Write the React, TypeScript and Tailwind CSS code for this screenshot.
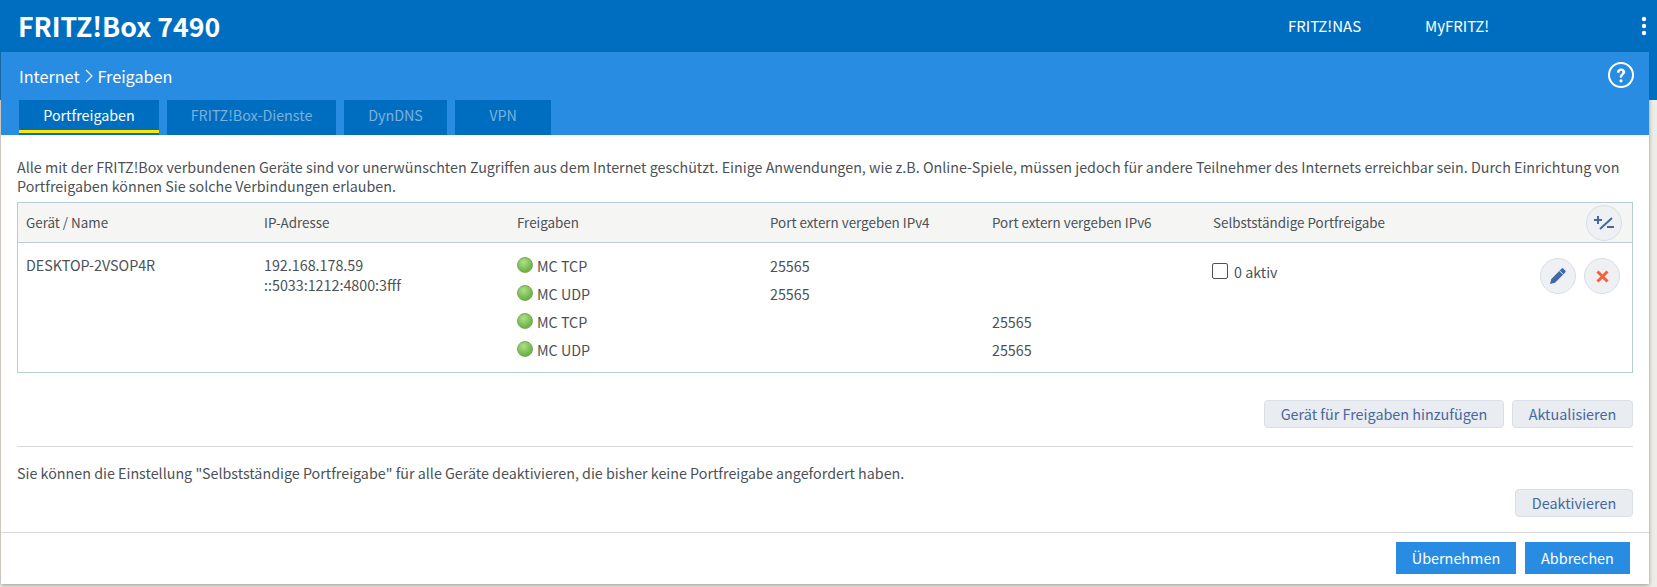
const font = { fontFamily: '"Noto Sans CJK SC", "Noto Sans", sans-serif' }

const shares = [
  { name: 'MC TCP', v4: '25565', v6: '' },
  { name: 'MC UDP', v4: '25565', v6: '' },
  { name: 'MC TCP', v4: '', v6: '25565' },
  { name: 'MC UDP', v4: '', v6: '25565' },
]

const tabs = [
  { label: 'Portfreigaben', width: 'w-[140px]', active: true },
  { label: 'FRITZ!Box-Dienste', width: 'w-[169px]', active: false },
  { label: 'DynDNS', width: 'w-[103px]', active: false },
  { label: 'VPN', width: 'w-[96px]', active: false },
]

const rowStarts = ['row-start-1', 'row-start-2', 'row-start-3', 'row-start-4']

function Led() {
  return (
    <span className="w-[16px] h-[16px] rounded-full shrink-0 border border-[#78a85c] bg-[radial-gradient(circle_at_40%_30%,#b0e088,#6cb446_70%)]" />
  )
}

function GreyButton({ label, width }: { label: string; width: string }) {
  return (
    <button className={`${width} h-[28px] rounded-[4px] bg-[#e9ecf0] border border-[#d8dfe6] text-[14.4px] leading-[26px] text-[#47689f]`}>
      {label}
    </button>
  )
}

function RoundButton({ children }: { children: React.ReactNode }) {
  return (
    <button className="w-[36px] h-[36px] rounded-full bg-[#eef0f3] border border-[#d8dfe6] flex items-center justify-center">
      {children}
    </button>
  )
}

export default function App() {
  return (
    <div className="w-[1657px] h-[587px] overflow-hidden bg-[#efede8] flex flex-col text-[#4b5157]" style={font}>
      {/* Header */}
      <header className="h-[52px] bg-[#006ec0] flex items-center text-white shrink-0">
        <h1 className="ml-[18px] text-[26.7px] leading-[52px] font-bold w-[1270px]">FRITZ!Box 7490</h1>
        <span className="text-[15px] w-[137px]">FRITZ!NAS</span>
        <span className="text-[15px] w-[220px]">MyFRITZ!</span>
        <svg width="6" height="20" viewBox="0 0 6 20" className="-ml-[4px]">
          <circle cx="3" cy="3" r="2.2" fill="#fff" />
          <circle cx="3" cy="10" r="2.2" fill="#fff" />
          <circle cx="3" cy="17" r="2.2" fill="#fff" />
        </svg>
      </header>

      <div className="flex flex-1 min-h-0">
        <div className="w-px h-[48px] bg-[#006ec0]" />
        <main className="w-[1648px] h-[532px] bg-white shadow-[0_1px_4px_rgba(90,85,70,0.6)] flex flex-col">
          {/* Title bar and tabs */}
          <div className="h-[83px] bg-[#278ce2] text-white shrink-0">
            <div className="h-[48px] flex items-center justify-between pl-[18px] pr-[15px]">
              <div className="text-[16.2px] flex items-center">
                Internet
                <svg width="12" height="16" viewBox="0 0 12 16" className="mx-[3px]">
                  <path d="M3 2l6 6-6 6" fill="none" stroke="#fff" strokeWidth="1.1" />
                </svg>
                Freigaben
              </div>
              <svg width="26" height="26" viewBox="0 0 26 26" className="-mt-[2px]">
                <circle cx="13" cy="13" r="12" fill="none" stroke="#fff" strokeWidth="2" />
                <path d="M9.3 10.2c.2-2.2 1.7-3.3 3.8-3.3 2.2 0 3.7 1.2 3.7 3.100 0 2.900-3.100 2.800-3.100 5.200h-1.600c0-3.200 2.800-3.200 2.800-5.100 0-1-.7-1.600-1.800-1.600-1.200 0-1.900.7-2 1.900z" fill="#fff" stroke="#fff" strokeWidth=".9" />
                <circle cx="13" cy="18.800" r="1.600" fill="#fff" />
              </svg>
            </div>
            <nav className="flex gap-[8px] pl-[18px]">
              {tabs.map((tab) => (
                <div
                  key={tab.label}
                  className={`${tab.width} h-[35px] bg-[#006ec0] text-[14.3px] text-center ${tab.active ? 'text-white' : 'text-[#7db0da]'}`}
                >
                  <div className={`h-[33px] leading-[30px] ${tab.active ? 'border-b-[3px] border-[#ffe600]' : ''}`}>{tab.label}</div>
                </div>
              ))}
            </nav>
          </div>

          {/* Content */}
          <div className="flex-1 px-[16px] pt-[22px] text-[14.3px] leading-[19px]">
            <p className="w-[1620px]">
              Alle mit der FRITZ!Box verbundenen Geräte sind vor unerwünschten Zugriffen aus dem Internet geschützt. Einige Anwendungen, wie z.B. Online-Spiele, müssen jedoch für andere Teilnehmer des Internets erreichbar sein. Durch Einrichtung von Portfreigaben können Sie solche Verbindungen erlauben.
            </p>

            <div className="mt-[7px] border border-[#b9cbd9] h-[171px]">
              <div className="h-[40px] bg-[#f5f5f3] border-b border-[#b9cbd9] grid grid-cols-[238px_253px_253px_222px_221px_1fr] pl-[8px] items-center text-[13.4px]">
                <div>Gerät / Name</div>
                <div>IP-Adresse</div>
                <div>Freigaben</div>
                <div>Port extern vergeben IPv4</div>
                <div>Port extern vergeben IPv6</div>
                <div className="flex items-center justify-between pr-[10px]">
                  Selbstständige Portfreigabe
                  <RoundButton>
                    <svg width="22" height="18" viewBox="0 0 22 18">
                      <path d="M1 6h8M5 2v8M14 13h7M7 15L19 4" fill="none" stroke="#47689f" strokeWidth="2" />
                    </svg>
                  </RoundButton>
                </div>
              </div>
              <div className="grid grid-cols-[238px_253px_253px_222px_221px_1fr] grid-rows-[repeat(4,28px)] pl-[8px] pt-[8px] items-center">
                <div className="row-span-4 self-start pt-[4px]">DESKTOP-2VSOP4R</div>
                <div className="row-span-4 self-start pt-[4px] leading-[20px]">
                  192.168.178.59
                  <br />
                  ::5033:1212:4800:3fff
                </div>
                {shares.map((share, i) => (
                  <div key={i} className="contents">
                    <div className={`flex items-center gap-[4px] col-start-3 ${rowStarts[i]}`}>
                      <Led />
                      {share.name}
                    </div>
                    <div className={`col-start-4 ${rowStarts[i]}`}>{share.v4}</div>
                    <div className={`col-start-5 ${rowStarts[i]}`}>{share.v6}</div>
                  </div>
                ))}
                <div className="col-start-6 row-start-1 row-span-4 self-start flex justify-between pr-[12px]">
                  <label className="flex items-center gap-[6px] h-[28px] mt-[6px] -ml-px">
                    <span className="w-[16px] h-[16px] rounded-[2px] border border-[#4b5157] bg-white" />
                    0 aktiv
                  </label>
                  <div className="flex gap-[8px] mt-[7px]">
                    <RoundButton>
                      <svg width="18" height="18" viewBox="0 0 18 18">
                        <path d="M1 17l1.300-5L12.500 1.800c.6-.6 1.400-.6 2 0l1.700 1.700c.6.600.6 1.400 0 2L6 15.700z" fill="#3f6aa8" />
                        <path d="M10.500 3.800l3.700 3.700" stroke="#eef0f3" strokeWidth="1" />
                      </svg>
                    </RoundButton>
                    <RoundButton>
                      <svg width="13" height="13" viewBox="0 0 13 13">
                        <path d="M1.500 1.500l10 10M11.500 1.500l-10 10" stroke="#f4613a" strokeWidth="3" />
                      </svg>
                    </RoundButton>
                  </div>
                </div>
              </div>
            </div>

            <div className="mt-[27px] flex justify-end gap-[8px]">
              <GreyButton label="Gerät für Freigaben hinzufügen" width="w-[240px]" />
              <GreyButton label="Aktualisieren" width="w-[121px]" />
            </div>

            <hr className="mt-[18px] border-[#d8d8d8]" />

            <p className="mt-[16px]">
              Sie können die Einstellung "Selbstständige Portfreigabe" für alle Geräte deaktivieren, die bisher keine Portfreigabe angefordert haben.
            </p>

            <div className="mt-[7px] flex justify-end">
              <GreyButton label="Deaktivieren" width="w-[118px]" />
            </div>
          </div>

          {/* Footer */}
          <div className="h-[52px] border-t border-[#d8d8d8] flex justify-end items-start gap-[9px] pr-[19px] pt-[9px] shrink-0">
            <button className="w-[120px] h-[32px] bg-[#278ce2] text-white text-[14.4px]">Übernehmen</button>
            <button className="w-[105px] h-[32px] bg-[#278ce2] text-white text-[14.4px]">Abbrechen</button>
          </div>
        </main>
        <div className="w-[8px] h-[48px] bg-[#006ec0]" />
      </div>
    </div>
  )
}
